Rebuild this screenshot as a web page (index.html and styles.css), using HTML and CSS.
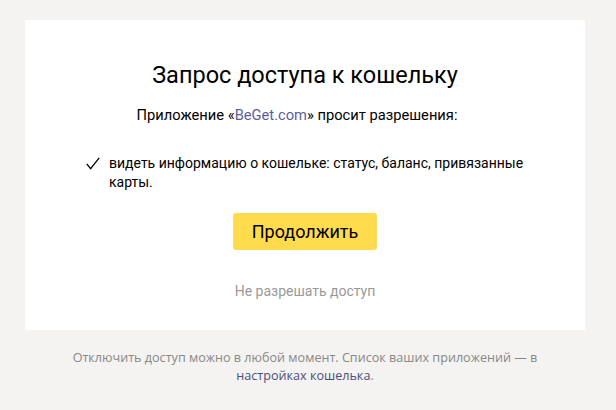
FILE: index.html
```html
<!DOCTYPE html>
<html lang="ru">
<head>
<meta charset="utf-8">
<link rel="stylesheet" href="styles.css">
</head>
<body>
<div class="page">
  <div class="card">
    <h1 class="title">Запрос доступа к кошельку</h1>
    <p class="subtitle">Приложение «<a class="app-link" href="#">BeGet.com</a>» просит разрешения:</p>
    <ul class="perms">
      <li class="perm"><svg class="check" width="14" height="13" viewBox="0 0 14 13"><path d="M0.8 6.8 L4.6 11.6 L13.2 0.8" fill="none" stroke="#000" stroke-width="1.3"/></svg><span class="perm-text">видеть информацию о кошельке: статус, баланс, привязанные карты.</span></li>
    </ul>
    <button class="btn">Продолжить</button>
    <a class="deny" href="#">Не разрешать доступ</a>
  </div>
  <p class="footer">Отключить доступ можно в любой момент. Список ваших приложений — в<br><a class="footer-link" href="#">настройках кошелька</a>.</p>
</div>
</body>
</html>
```
FILE: styles.css
```css
html, body {
  margin: 0;
  padding: 0;
  background: #f4f3f1;
  font-family: Roboto, "Noto Sans", sans-serif;
  color: #000;
}
.page {
  width: 610px;
  padding-top: 20px;
  display: flex;
  flex-direction: column;
  align-items: center;
}
.card {
  width: 560px;
  box-sizing: border-box;
  background: #fff;
  padding: 41px 0 29px;
  display: flex;
  flex-direction: column;
  align-items: center;
}
.title {
  margin: 0;
  font-size: 23.5px;
  line-height: 28px;
  font-weight: 400;
}
.subtitle {
  margin: 16px 0 0;
  padding-right: 16px;
  font-size: 14.7px;
  line-height: 20px;
}
.app-link {
  color: #5b5e9e;
  text-decoration: none;
}
.perms {
  list-style: none;
  margin: 29px 0 0;
  padding: 0;
  width: 446px;
}
.perm {
  display: flex;
  align-items: flex-start;
  font-size: 14px;
  line-height: 19px;
}
.check {
  flex: none;
  margin: 3px 9px 0 4px;
}
.btn {
  margin-top: 21px;
  width: 144px;
  height: 37px;
  border: none;
  border-radius: 3px;
  background: #ffdb4d;
  font-family: inherit;
  font-size: 18px;
  color: #000;
  padding: 0;
}
.deny {
  margin-top: 31px;
  font-size: 14px;
  line-height: 20px;
  color: #999;
  text-decoration: none;
}
.footer {
  margin: 19px 0 0;
  font-family: "Open Sans", sans-serif;
  font-size: 12.6px;
  line-height: 18px;
  text-align: center;
  color: #888;
}
.footer-link {
  color: #4b4f7e;
  text-decoration: none;
}
```
